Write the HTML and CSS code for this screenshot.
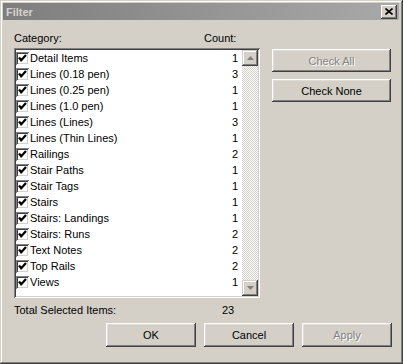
FILE: index.html
```html
<!DOCTYPE html>
<html lang="en">
<head>
    <meta charset="UTF-8">
    <title>Filter</title>
    <link rel="stylesheet" href="styles.css">
</head>
<body>
    <div class="window">
        <div class="titlebar">
            <span class="title">Filter</span>
            <button class="close-btn">
                <svg width="8" height="7" viewBox="0 0 8 7"><path d="M0.5 0.5 L7.5 6.5 M7.5 0.5 L0.5 6.5" stroke="#000" stroke-width="1.6"/></svg>
            </button>
        </div>

        <div class="body">
            <div class="main">
                <div class="left">
                    <div class="labels">
                        <span class="lbl-cat">Category:</span>
                        <span>Count:</span>
                    </div>
                    <div class="listbox">
                        <div class="rows">
                            <div class="row"><span class="check"></span><span class="name">Detail Items</span><span class="count">1</span></div>
                            <div class="row"><span class="check"></span><span class="name">Lines (0.18 pen)</span><span class="count">3</span></div>
                            <div class="row"><span class="check"></span><span class="name">Lines (0.25 pen)</span><span class="count">1</span></div>
                            <div class="row"><span class="check"></span><span class="name">Lines (1.0 pen)</span><span class="count">1</span></div>
                            <div class="row"><span class="check"></span><span class="name">Lines (Lines)</span><span class="count">3</span></div>
                            <div class="row"><span class="check"></span><span class="name">Lines (Thin Lines)</span><span class="count">1</span></div>
                            <div class="row"><span class="check"></span><span class="name">Railings</span><span class="count">2</span></div>
                            <div class="row"><span class="check"></span><span class="name">Stair Paths</span><span class="count">1</span></div>
                            <div class="row"><span class="check"></span><span class="name">Stair Tags</span><span class="count">1</span></div>
                            <div class="row"><span class="check"></span><span class="name">Stairs</span><span class="count">1</span></div>
                            <div class="row"><span class="check"></span><span class="name">Stairs: Landings</span><span class="count">1</span></div>
                            <div class="row"><span class="check"></span><span class="name">Stairs: Runs</span><span class="count">2</span></div>
                            <div class="row"><span class="check"></span><span class="name">Text Notes</span><span class="count">2</span></div>
                            <div class="row"><span class="check"></span><span class="name">Top Rails</span><span class="count">2</span></div>
                            <div class="row"><span class="check"></span><span class="name">Views</span><span class="count">1</span></div>
                        </div>
                        <div class="scrollbar">
                            <div class="scroll-btn">
                                <svg width="7" height="4" viewBox="0 0 7 4"><path d="M3.5 0 L7 4 L0 4 Z" fill="#808080"/></svg>
                            </div>
                            <div class="track"></div>
                            <div class="scroll-btn">
                                <svg width="7" height="4" viewBox="0 0 7 4"><path d="M0 0 L7 0 L3.5 4 Z" fill="#808080"/></svg>
                            </div>
                        </div>
                    </div>
                </div>
                <div class="side">
                    <button class="btn wide disabled">Check All</button>
                    <button class="btn wide">Check None</button>
                </div>
            </div>

            <div class="total">
                <span class="total-label">Total Selected Items:</span>
                <span>23</span>
            </div>

            <div class="actions">
                <button class="btn">OK</button>
                <button class="btn">Cancel</button>
                <button class="btn disabled">Apply</button>
            </div>
        </div>
    </div>
</body>
</html>
```

FILE: styles.css
```css
body {
    margin: 0;
    font-family: "Liberation Sans", Arial, sans-serif;
    font-size: 11px;
    color: #000;
    background: #d4d0c8;
}
.window {
    width: 403px;
    height: 364px;
    box-sizing: border-box;
    padding: 3px 4px 4px 3px;
    background: #d4d0c8;
    box-shadow: inset -1px -1px #404040, inset 1px 1px #d4d0c8,
                inset -2px -2px #808080, inset 2px 2px #fff;
}
.titlebar {
    height: 17px;
    display: flex;
    align-items: center;
    justify-content: space-between;
    padding: 0 2px 0 3px;
    background: linear-gradient(to right, #7e7e7e, #a9a9a9);
}
.title {
    font-weight: bold;
    color: #d6d3cc;
}
.close-btn {
    width: 16px;
    height: 14px;
    padding: 0;
    border: 0;
    display: flex;
    align-items: center;
    justify-content: center;
    background: #d4d0c8;
    box-shadow: inset -1px -1px #404040, inset 1px 1px #fff,
                inset -2px -2px #808080;
}
.body {
    padding: 11px 0 0 11px;
}
.main {
    display: flex;
    gap: 12px;
}
.left {
    width: 246px;
}
.labels {
    height: 17px;
    display: flex;
    line-height: 14px;
}
.lbl-cat {
    width: 190px;
}
.listbox {
    height: 250px;
    box-sizing: border-box;
    padding: 2px;
    display: flex;
    background: #fff;
    box-shadow: inset 1px 1px #808080, inset -1px -1px #fff,
                inset 2px 2px #404040, inset -2px -2px #d4d0c8;
}
.rows {
    flex: 1;
    padding-right: 4px;
}
.row {
    height: 16px;
    display: flex;
    align-items: center;
}
.check {
    width: 13px;
    height: 13px;
    box-sizing: border-box;
    margin-right: 1px;
    background: #fff url("data:image/svg+xml,%3Csvg xmlns='http://www.w3.org/2000/svg' width='13' height='13'%3E%3Cpath d='M3 5.5 L5.2 8.3 L10 3' fill='none' stroke='%23000' stroke-width='2.2'/%3E%3C/svg%3E") no-repeat;
    box-shadow: inset 1px 1px #808080, inset -1px -1px #fff,
                inset 2px 2px #404040, inset -2px -2px #d4d0c8;
}
.name {
    flex: 1;
}
.count {
    text-align: right;
}
.scrollbar {
    width: 16px;
    display: flex;
    flex-direction: column;
}
.scroll-btn {
    height: 16px;
    display: flex;
    align-items: center;
    justify-content: center;
    background: #d4d0c8;
    box-shadow: inset -1px -1px #404040, inset 1px 1px #d4d0c8,
                inset -2px -2px #808080, inset 2px 2px #fff;
}
.track {
    flex: 1;
    background: repeating-conic-gradient(#fff 0% 25%, #d4d0c8 0% 50%) 0 0 / 2px 2px;
}
.side {
    padding-top: 18px;
    display: flex;
    flex-direction: column;
    gap: 7px;
}
.btn {
    width: 90px;
    height: 24px;
    padding: 0;
    border: 0;
    font: inherit;
    color: #000;
    background: #d4d0c8;
    box-shadow: inset -1px -1px #404040, inset 1px 1px #fff,
                inset -2px -2px #808080, inset 2px 2px #dfdcd5;
}
.btn.wide {
    width: 119px;
    height: 23px;
}
.btn.disabled {
    color: #808080;
    text-shadow: 1px 1px #fff;
}
.total {
    margin-top: 5px;
    height: 14px;
    line-height: 14px;
    display: flex;
}
.total-label {
    width: 208px;
}
.actions {
    margin-top: 6px;
    padding-right: 7px;
    display: flex;
    justify-content: flex-end;
    gap: 8px;
}
```
